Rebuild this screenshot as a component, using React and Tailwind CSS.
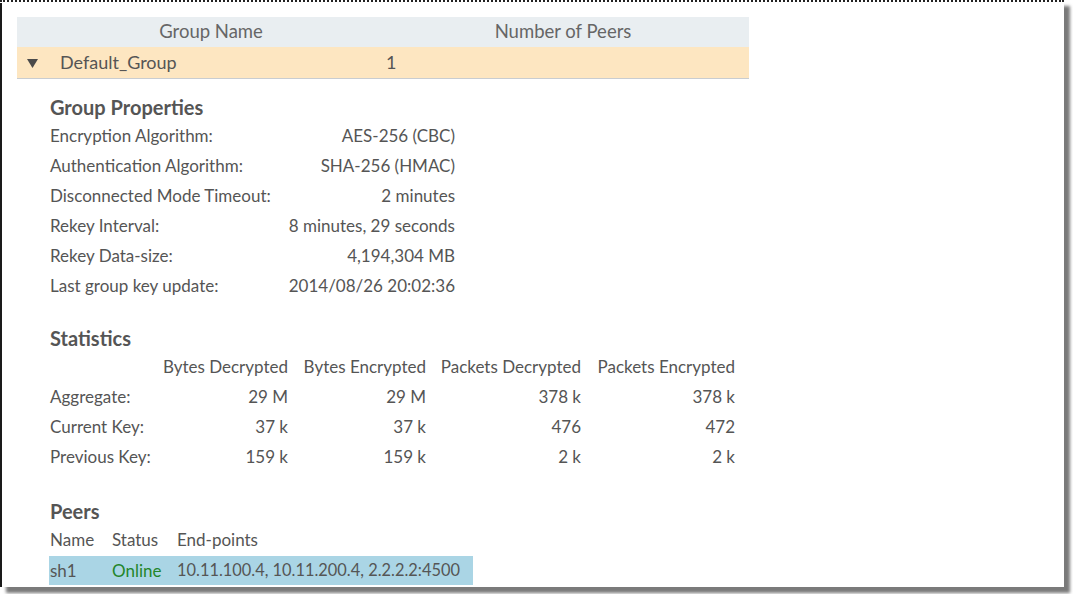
import React from "react";

const props = [
  ["Encryption Algorithm:", "AES-256 (CBC)"],
  ["Authentication Algorithm:", "SHA-256 (HMAC)"],
  ["Disconnected Mode Timeout:", "2 minutes"],
  ["Rekey Interval:", "8 minutes, 29 seconds"],
  ["Rekey Data-size:", "4,194,304 MB"],
  ["Last group key update:", "2014/08/26 20:02:36"],
];

const statCols = ["Bytes Decrypted", "Bytes Encrypted", "Packets Decrypted", "Packets Encrypted"];

const stats = [
  ["Aggregate:", "29 M", "29 M", "378 k", "378 k"],
  ["Current Key:", "37 k", "37 k", "476", "472"],
  ["Previous Key:", "159 k", "159 k", "2 k", "2 k"],
];

function Caret() {
  return (
    <svg width="11" height="9" viewBox="0 0 11 9">
      <polygon points="0,0 11,0 5.5,9" fill="#4a4a4a" />
    </svg>
  );
}

function SectionTitle({ children, className }) {
  return (
    <div className={"text-[20px] font-bold text-[#555] " + className}>
      {children}
    </div>
  );
}

export default function App() {
  return (
    <div className="w-[1073px] h-[594px] bg-white overflow-hidden" style={{ fontFamily: "Lato, 'Open Sans', sans-serif" }}>
      <div className="w-[1064px] h-[587px] bg-white shadow-[6px_6px_3px_#7a7a7a] text-[17px] text-[#555]">
        {/* ragged top edge */}
        <div className="h-[3px] border-t-2 border-dotted border-[#222]" />
        <div className="h-[584px] border-l-2 border-[#1a1a1a] pt-[14px] pl-[15px]">
          {/* group list */}
          <div className="w-[732px]">
            <div className="grid grid-cols-[28px_332px_372px] h-[30px] items-center bg-[#e9eef1] text-[18.5px] text-[#666]">
              <div />
              <div className="text-center">Group Name</div>
              <div className="text-center">Number of Peers</div>
            </div>
            <div className="grid grid-cols-[43px_325px_364px] h-[32px] items-center bg-[#fde6c1] border-b border-[#c9cdd1] text-[18px] text-[#555]">
              <div className="pl-[10px] pt-[2px] flex items-center"><Caret /></div>
              <div>Default_Group</div>
              <div className="pl-[1px]">1</div>
            </div>
          </div>

          <div className="pl-[33px]">
            <SectionTitle className="mt-[14px] h-[28px] leading-[28px]">Group Properties</SectionTitle>
            <div className="w-[405px]">
              {props.map(([k, v]) => (
                <div key={k} className="flex justify-between items-center h-[30px] whitespace-nowrap">
                  <span>{k}</span>
                  <span>{v}</span>
                </div>
              ))}
            </div>

            <SectionTitle className="mt-[24px] h-[27px] leading-[27px]">Statistics</SectionTitle>
            <div className="grid grid-cols-[100px_138px_138px_155px_154px] w-[685px]">
              <div className="h-[30px]" />
              {statCols.map((c) => (
                <div key={c} className="h-[30px] flex items-center justify-end whitespace-nowrap">{c}</div>
              ))}
              {stats.map((row) =>
                row.map((cell, i) => (
                  <div
                    key={row[0] + i}
                    className={"h-[30px] flex items-center whitespace-nowrap " + (i === 0 ? "justify-start" : "justify-end")}
                  >
                    {cell}
                  </div>
                ))
              )}
            </div>

            <SectionTitle className="mt-[25px] h-[28px] leading-[28px]">Peers</SectionTitle>
            <div className="w-[424px] -ml-px">
              <div className="grid grid-cols-[62px_65px_1fr] h-[30px] items-center pl-px">
                <div>Name</div>
                <div>Status</div>
                <div>End-points</div>
              </div>
              <div className="grid grid-cols-[62px_65px_1fr] h-[29px] mt-px items-center pl-px bg-[#aad5e5] whitespace-nowrap">
                <div>sh1</div>
                <div className="text-[#23862a]">Online</div>
                <div className="text-[16.4px]">10.11.100.4, 10.11.200.4, 2.2.2.2:4500</div>
              </div>
            </div>
          </div>
        </div>
      </div>
    </div>
  );
}
